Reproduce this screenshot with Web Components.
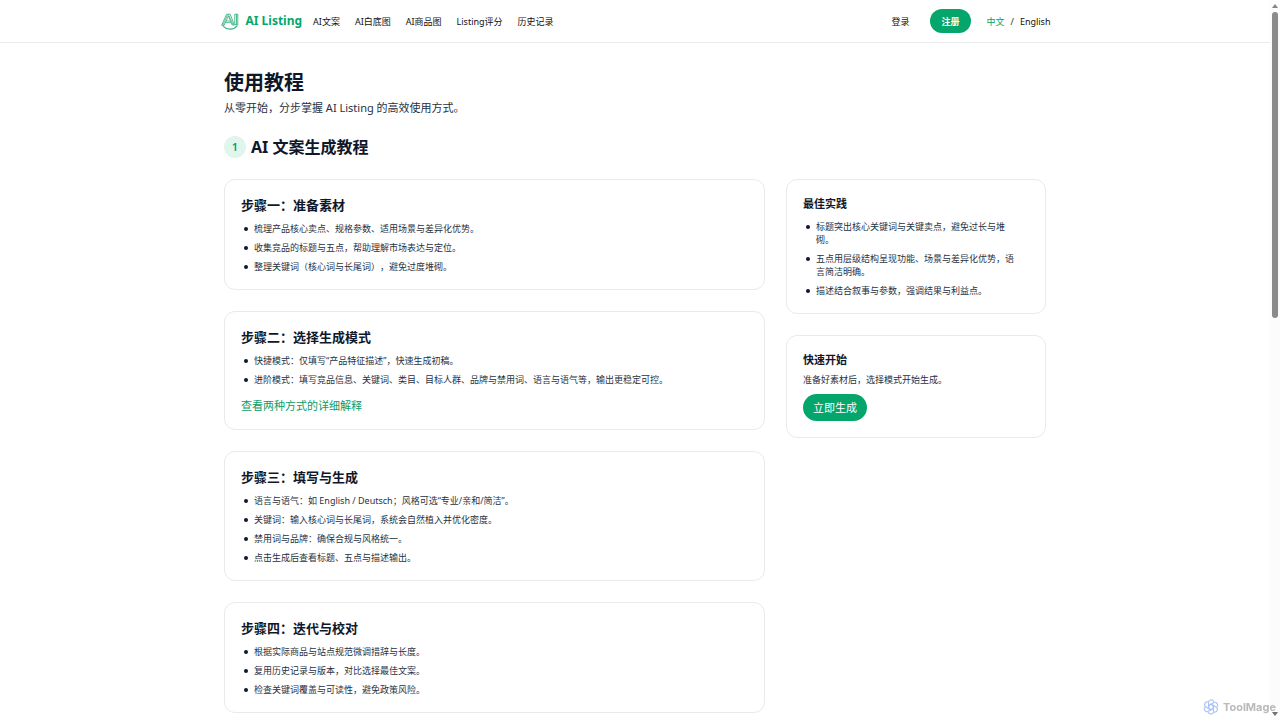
<!DOCTYPE html>
<html lang="zh-CN">
<head>
<meta charset="utf-8">
<meta name="viewport" content="width=device-width, initial-scale=1">
<title>使用教程 - AI Listing</title>
<style>
  :root {
    --green: #05a66b;
    --green-text: #0a9b68;
    --ink: #0f172a;
    --body: #27313f;
    --line: #e9eaec;
  }
  body {
    margin: 0;
    padding-right: 10px;
    background: #fff;
    color: var(--body);
    font: 9px/13px "Noto Sans", "Noto Sans CJK SC", sans-serif;
    text-spacing-trim: space-all;
  }
</style>
</head>
<body>

<app-header>
  <nav-link href="#copy">AI文案</nav-link>
  <nav-link href="#white">AI白底图</nav-link>
  <nav-link href="#product">AI商品图</nav-link>
  <nav-link href="#score">Listing评分</nav-link>
  <nav-link href="#history">历史记录</nav-link>
</app-header>

<tutorial-page>
  <span slot="title">使用教程</span>
  <span slot="intro">从零开始，分步掌握 AI Listing 的高效使用方式。</span>

  <tutorial-section number="1">
    <span slot="title">AI 文案生成教程</span>

    <step-card>
      <span slot="title">步骤一：准备素材</span>
      <tip-list>
        <li>梳理产品核心卖点、规格参数、适用场景与差异化优势。</li>
        <li>收集竞品的标题与五点，帮助理解市场表达与定位。</li>
        <li>整理关键词（核心词与长尾词），避免过度堆砌。</li>
      </tip-list>
    </step-card>

    <step-card>
      <span slot="title">步骤二：选择生成模式</span>
      <tip-list>
        <li>快捷模式：仅填写“产品特征描述”，快速生成初稿。</li>
        <li>进阶模式：填写竞品信息、关键词、类目、目标人群、品牌与禁用词、语言与语气等，输出更稳定可控。</li>
      </tip-list>
      <more-link href="#modes">查看两种方式的详细解释</more-link>
    </step-card>

    <step-card>
      <span slot="title">步骤三：填写与生成</span>
      <tip-list>
        <li>语言与语气：如 English / Deutsch；风格可选“专业/亲和/简洁”。</li>
        <li>关键词：输入核心词与长尾词，系统会自然植入并优化密度。</li>
        <li>禁用词与品牌：确保合规与风格统一。</li>
        <li>点击生成后查看标题、五点与描述输出。</li>
      </tip-list>
    </step-card>

    <step-card>
      <span slot="title">步骤四：迭代与校对</span>
      <tip-list>
        <li>根据实际商品与站点规范微调措辞与长度。</li>
        <li>复用历史记录与版本，对比选择最佳文案。</li>
        <li>检查关键词覆盖与可读性，避免政策风险。</li>
      </tip-list>
    </step-card>

    <side-card slot="aside">
      <span slot="title">最佳实践</span>
      <tip-list narrow>
        <li>标题突出核心关键词与关键卖点，避免过长与堆砌。</li>
        <li>五点用层级结构呈现功能、场景与差异化优势，语言简洁明确。</li>
        <li>描述结合叙事与参数，强调结果与利益点。</li>
      </tip-list>
    </side-card>

    <side-card slot="aside" compact>
      <span slot="title">快速开始</span>
      准备好素材后，选择模式开始生成。
      <pill-button slot="action" large>立即生成</pill-button>
    </side-card>
  </tutorial-section>
</tutorial-page>

<page-scrollbar></page-scrollbar>
<tool-mark></tool-mark>

<script>
// Attach an open shadow root and fill it with the given markup
class BaseElement extends HTMLElement {
  constructor() {
    super();
    const template = document.createElement('template');
    template.innerHTML = this.constructor.markup;
    this.attachShadow({mode: 'open'});
    this.shadowRoot.appendChild(template.content.cloneNode(true));
  }
}

///////////////////
// Links and buttons
class NavLink extends BaseElement {
  static markup = `
    <style>
      :host {display: block; color: #111;}
      a {color: inherit; text-decoration: none; white-space: nowrap;}
      a:hover {color: var(--green);}
    </style>
    <a><slot></slot></a>
  `;

  connectedCallback() {
    this.shadowRoot.querySelector('a').href = this.getAttribute('href') || '#';
  }
}

class MoreLink extends BaseElement {
  static markup = `
    <style>
      :host {display: block; margin-top: 12px; font-size: 11px; line-height: 15px;}
      a {color: var(--green-text); text-decoration: none;}
      a:hover {text-decoration: underline;}
    </style>
    <a><slot></slot></a>
  `;

  connectedCallback() {
    this.shadowRoot.querySelector('a').href = this.getAttribute('href') || '#';
  }
}

class PillButton extends BaseElement {
  static markup = `
    <style>
      :host {display: inline-flex;}
      button {
        height: 24px; padding: 0 11px; border: 0; border-radius: 14px;
        background: var(--green); color: #fff; cursor: pointer;
        font: inherit; font-weight: 600; white-space: nowrap;
      }
      :host([large]) button {height: 27px; padding: 0 10px; font-size: 11px; font-weight: 400;}
    </style>
    <button type="button"><slot></slot></button>
  `;
}

///////////////////
// Header
class AppHeader extends BaseElement {
  static markup = `
    <style>
      :host {display: block; border-bottom: 1px solid var(--line);}
      .bar {
        display: flex; align-items: center; box-sizing: border-box;
        max-width: 853px; height: 42px; margin: 0 auto; padding: 0 11px;
      }
      .brand {
        display: flex; align-items: center; gap: 6px; margin-right: 11px;
        color: var(--green); font-size: 12px; line-height: 18px; font-weight: 700;
        text-decoration: none; white-space: nowrap;
      }
      .brand svg {width: 20px; height: 20px;}
      nav {display: flex; gap: 15px;}
      .account {display: flex; align-items: center; margin-left: auto; gap: 21px;}
      .lang {display: flex; gap: 6px; margin-left: -5px;}
      .current {color: var(--green);}
    </style>
    <header class="bar">
      <a class="brand" href="#">
        <svg viewBox="0 0 20 20" fill="none" stroke="#3fb286" stroke-linecap="round" stroke-linejoin="round" aria-hidden="true">
          <path d="M1.8 14 6.6 3.2h3.6L14.4 14h-2.2L8.4 5 4.2 14z" stroke-width=".9"/>
          <path d="M3 14 7.5 4M8.4 3.4 13.3 14" stroke-width=".8"/>
          <path d="M5.6 11.6h5M6.3 10h3.7" stroke-width=".8"/>
          <path d="M15.2 3.2h2.6v10.4h-2.6zM16.5 3.4v10" stroke-width=".9"/>
          <path d="M3.6 15.6c3.8 3.6 10 3.5 13.4-.8" stroke-width="1.3"/>
        </svg>
        AI Listing
      </a>
      <nav><slot></slot></nav>
      <div class="account">
        <nav-link href="#login">登录</nav-link>
        <pill-button>注册</pill-button>
        <div class="lang">
          <nav-link class="current" href="#zh">中文</nav-link>
          <span>/</span>
          <nav-link href="#en">English</nav-link>
        </div>
      </div>
    </header>
  `;
}

///////////////////
// Page and section
class TutorialPage extends BaseElement {
  static markup = `
    <style>
      :host {
        display: block; box-sizing: border-box;
        max-width: 854px; margin: 0 auto; padding: 28px 16px 0;
      }
      h1 {margin: 0 0 5px; color: var(--ink); font-size: 20px; line-height: 24px; font-weight: 700;}
      p {margin: 0 0 20px; font-size: 11px; line-height: 16px;}
    </style>
    <main>
      <h1><slot name="title"></slot></h1>
      <p><slot name="intro"></slot></p>
      <slot></slot>
    </main>
  `;
}

class TutorialSection extends BaseElement {
  static markup = `
    <style>
      :host {display: block;}
      h2 {
        display: flex; align-items: center; gap: 5px; margin: 0 0 21px;
        color: var(--ink); font-size: 16px; line-height: 22px; font-weight: 700;
      }
      .number {
        display: flex; align-items: center; justify-content: center;
        width: 22px; height: 22px; border-radius: 50%;
        background: #e0f5ec; color: var(--green-text); font-size: 11px; line-height: 16px; font-weight: 600;
      }
      .grid {display: grid; grid-template-columns: repeat(3, 1fr); gap: 21px; align-items: start;}
      .steps {grid-column: span 2;}
      .steps, aside {display: grid; gap: 21px;}
    </style>
    <section>
      <h2><span class="number"></span><slot name="title"></slot></h2>
      <div class="grid">
        <div class="steps"><slot></slot></div>
        <aside><slot name="aside"></slot></aside>
      </div>
    </section>
  `;

  connectedCallback() {
    this.shadowRoot.querySelector('.number').textContent = this.getAttribute('number');
  }
}

///////////////////
// Cards
class StepCard extends BaseElement {
  static markup = `
    <style>
      :host {display: block; padding: 16px; border: 1px solid var(--line); border-radius: 11px;}
      h3 {margin: 0 0 7px; color: var(--ink); font-size: 13px; line-height: 19px; font-weight: 700;}
    </style>
    <h3><slot name="title"></slot></h3>
    <slot></slot>
  `;
}

class SideCard extends BaseElement {
  static markup = `
    <style>
      :host {display: block; padding: 16px; border: 1px solid var(--line); border-radius: 11px;}
      h4 {margin: 0 0 8px; color: var(--ink); font-size: 11px; line-height: 16px; font-weight: 700;}
      :host([compact]) h4 {margin-bottom: 5px;}
      ::slotted(pill-button) {margin-top: 8px;}
      .action {display: flex;}
    </style>
    <h4><slot name="title"></slot></h4>
    <div><slot></slot></div>
    <div class="action"><slot name="action"></slot></div>
  `;
}

class TipList extends BaseElement {
  static markup = `
    <style>
      :host {display: block;}
      ul {display: grid; gap: 6px; margin: 0; padding: 0 0 0 3px; list-style: none;}
      :host([narrow]) ul {padding-right: 8px;}
      ::slotted(li) {display: flex; gap: 6px;}
      ::slotted(li)::before {
        content: ''; flex: none; width: 4px; height: 4px; margin-top: 5px;
        border-radius: 50%; background: var(--ink);
      }
    </style>
    <ul><slot></slot></ul>
  `;
}

///////////////////
// Scrollbar strip on the window's right edge
class PageScrollbar extends BaseElement {
  static markup = `
    <style>
      :host {
        position: fixed; top: 0; right: 0; bottom: 0; width: 10px; box-sizing: border-box;
        display: flex; flex-direction: column; align-items: center;
        padding: 4px 0; background: #fcfcfc;
      }
      .up, .down {border: 3px solid transparent;}
      .up {border-top: 0; border-bottom: 4px solid #858585;}
      .down {border-bottom: 0; border-top: 4px solid #707070;}
      .track {flex: 1; width: 6px; margin: 4px 0;}
      .thumb {height: 44%; border-radius: 3px; background: #8b8b8b;}
    </style>
    <div class="up"></div>
    <div class="track"><div class="thumb"></div></div>
    <div class="down"></div>
  `;
}

class ToolMark extends BaseElement {
  static markup = `
    <style>
      :host {
        position: fixed; right: 4px; bottom: 5px; display: flex; align-items: center; gap: 4px;
        color: #b9b9b9; font: 700 11px/16px Inter, sans-serif;
      }
      svg {width: 16px; height: 16px;}
    </style>
    <svg viewBox="0 0 16 16" fill="none" stroke="#a9c4f5" stroke-width="1.1" stroke-linecap="round" aria-hidden="true">
      <defs><path id="petal" d="M8 5.3 5.6 6.7V3.5C5.6.3 10 .1 10.8 2.8M8 5.3l3.2 1.8"/></defs>
      <use href="#petal"/>
      <use href="#petal" transform="rotate(60 8 8)"/>
      <use href="#petal" transform="rotate(120 8 8)"/>
      <use href="#petal" transform="rotate(180 8 8)"/>
      <use href="#petal" transform="rotate(240 8 8)"/>
      <use href="#petal" transform="rotate(300 8 8)"/>
    </svg>
    <span>ToolMage</span>
  `;
}

window.customElements.define('nav-link', NavLink);
window.customElements.define('more-link', MoreLink);
window.customElements.define('pill-button', PillButton);
window.customElements.define('app-header', AppHeader);
window.customElements.define('tutorial-page', TutorialPage);
window.customElements.define('tutorial-section', TutorialSection);
window.customElements.define('step-card', StepCard);
window.customElements.define('side-card', SideCard);
window.customElements.define('tip-list', TipList);
window.customElements.define('page-scrollbar', PageScrollbar);
window.customElements.define('tool-mark', ToolMark);
</script>
</body>
</html>
